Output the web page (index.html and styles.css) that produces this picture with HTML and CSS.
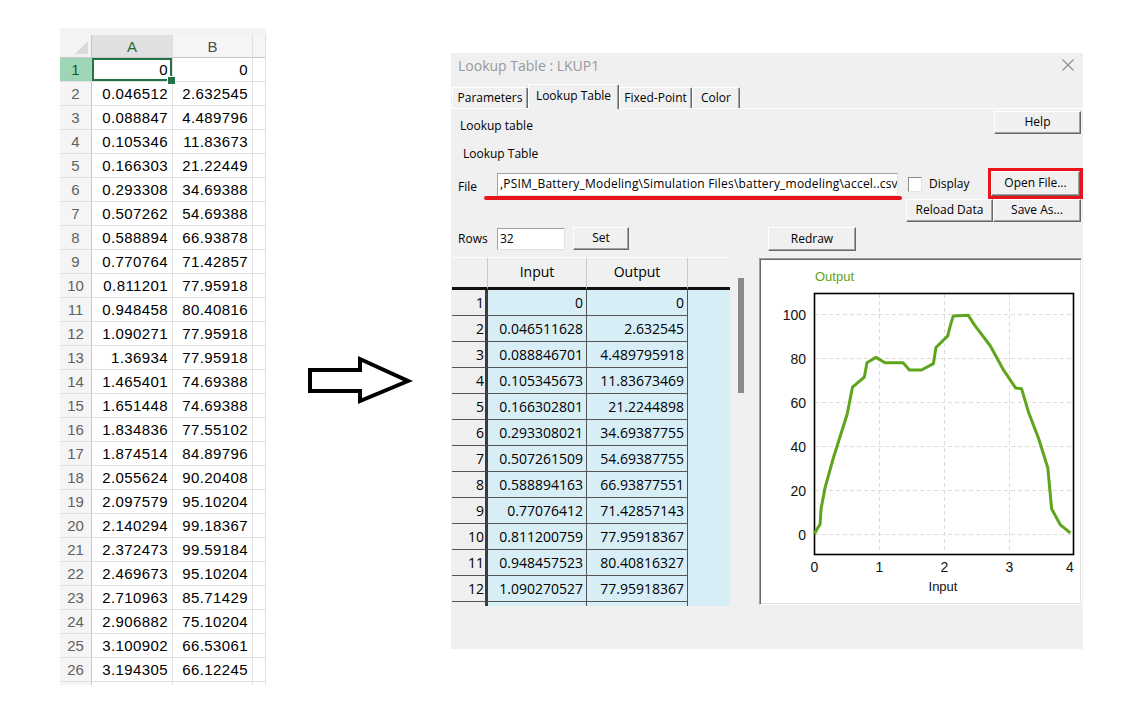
FILE: index.html
```html
<!DOCTYPE html>
<html lang="en">
<head>
  <meta charset="UTF-8" />
  <meta name="viewport" content="width=device-width, initial-scale=1.0"/>
  <title>Lookup Table : LKUP1</title>
  <link rel="stylesheet" href="styles.css">
</head>
<body>
  <div class="page">

    <!-- spreadsheet with the source data -->
    <div class="sheet">
      <div class="sheet-grid">
        <div class="corner"></div><div class="col-head active">A</div><div class="col-head">B</div><div class="col-head"></div>
        <div class="row-head active">1</div><div class="cell current">0</div><div class="cell">0</div><div class="cell"></div>
        <div class="row-head">2</div><div class="cell">0.046512</div><div class="cell">2.632545</div><div class="cell"></div>
        <div class="row-head">3</div><div class="cell">0.088847</div><div class="cell">4.489796</div><div class="cell"></div>
        <div class="row-head">4</div><div class="cell">0.105346</div><div class="cell">11.83673</div><div class="cell"></div>
        <div class="row-head">5</div><div class="cell">0.166303</div><div class="cell">21.22449</div><div class="cell"></div>
        <div class="row-head">6</div><div class="cell">0.293308</div><div class="cell">34.69388</div><div class="cell"></div>
        <div class="row-head">7</div><div class="cell">0.507262</div><div class="cell">54.69388</div><div class="cell"></div>
        <div class="row-head">8</div><div class="cell">0.588894</div><div class="cell">66.93878</div><div class="cell"></div>
        <div class="row-head">9</div><div class="cell">0.770764</div><div class="cell">71.42857</div><div class="cell"></div>
        <div class="row-head">10</div><div class="cell">0.811201</div><div class="cell">77.95918</div><div class="cell"></div>
        <div class="row-head">11</div><div class="cell">0.948458</div><div class="cell">80.40816</div><div class="cell"></div>
        <div class="row-head">12</div><div class="cell">1.090271</div><div class="cell">77.95918</div><div class="cell"></div>
        <div class="row-head">13</div><div class="cell">1.36934</div><div class="cell">77.95918</div><div class="cell"></div>
        <div class="row-head">14</div><div class="cell">1.465401</div><div class="cell">74.69388</div><div class="cell"></div>
        <div class="row-head">15</div><div class="cell">1.651448</div><div class="cell">74.69388</div><div class="cell"></div>
        <div class="row-head">16</div><div class="cell">1.834836</div><div class="cell">77.55102</div><div class="cell"></div>
        <div class="row-head">17</div><div class="cell">1.874514</div><div class="cell">84.89796</div><div class="cell"></div>
        <div class="row-head">18</div><div class="cell">2.055624</div><div class="cell">90.20408</div><div class="cell"></div>
        <div class="row-head">19</div><div class="cell">2.097579</div><div class="cell">95.10204</div><div class="cell"></div>
        <div class="row-head">20</div><div class="cell">2.140294</div><div class="cell">99.18367</div><div class="cell"></div>
        <div class="row-head">21</div><div class="cell">2.372473</div><div class="cell">99.59184</div><div class="cell"></div>
        <div class="row-head">22</div><div class="cell">2.469673</div><div class="cell">95.10204</div><div class="cell"></div>
        <div class="row-head">23</div><div class="cell">2.710963</div><div class="cell">85.71429</div><div class="cell"></div>
        <div class="row-head">24</div><div class="cell">2.906882</div><div class="cell">75.10204</div><div class="cell"></div>
        <div class="row-head">25</div><div class="cell">3.100902</div><div class="cell">66.53061</div><div class="cell"></div>
        <div class="row-head">26</div><div class="cell">3.194305</div><div class="cell">66.12245</div><div class="cell"></div>
        <div class="row-head"></div><div class="cell"></div><div class="cell"></div><div class="cell"></div>
      </div>
    </div>

    <svg class="arrow" width="110" height="52" viewBox="0 0 110 52">
      <polygon points="4,15 54,15 54,4 102,26 54,46 54,36 4,36" fill="none" stroke="#000" stroke-width="4" stroke-linejoin="miter"/>
    </svg>

    <!-- PSIM lookup table dialog -->
    <div class="dialog">
      <div class="titlebar">
        <span class="title">Lookup Table : LKUP1</span>
        <svg class="close" width="12" height="12" viewBox="0 0 12 12">
          <path d="M0.5 0.5 L11.5 11.5 M11.5 0.5 L0.5 11.5" stroke="#8c8c8c" stroke-width="1.1" fill="none"/>
        </svg>
      </div>

      <div class="tabs">
        <div class="tab tab-params">Parameters</div>
        <div class="tab tab-lookup active">Lookup Table</div>
        <div class="tab tab-fixed">Fixed-Point</div>
        <div class="tab tab-color">Color</div>
      </div>

      <div class="panel">
        <div class="row row-help">
          <span class="label">Lookup table</span>
          <div class="btn btn-help">Help</div>
        </div>

        <div class="row row-sub">
          <span class="label">Lookup Table</span>
        </div>

        <div class="row row-file">
          <span class="label file-label">File</span>
          <div class="field file-field">,PSIM_Battery_Modeling\Simulation Files\battery_modeling\accel..csv</div>
          <span class="check"></span>
          <span class="label check-label">Display</span>
          <div class="btn btn-open">Open File...</div>
          <div class="mark-line"></div>
        </div>

        <div class="row row-reload">
          <div class="btn btn-reload">Reload Data</div>
          <div class="btn btn-save">Save As...</div>
        </div>

        <div class="row row-rows">
          <span class="label rows-label">Rows</span>
          <div class="field rows-field">32</div>
          <div class="btn btn-set">Set</div>
          <div class="btn btn-redraw">Redraw</div>
        </div>

        <div class="main">
          <div class="grid">
            <div class="gh"></div><div class="gh">Input</div><div class="gh">Output</div><div class="gh last"></div>
            <div class="rh">1</div><div class="gc">0</div><div class="gc">0</div><div class="gx"></div>
            <div class="rh">2</div><div class="gc">0.046511628</div><div class="gc">2.632545</div><div class="gx"></div>
            <div class="rh">3</div><div class="gc">0.088846701</div><div class="gc">4.489795918</div><div class="gx"></div>
            <div class="rh">4</div><div class="gc">0.105345673</div><div class="gc">11.83673469</div><div class="gx"></div>
            <div class="rh">5</div><div class="gc">0.166302801</div><div class="gc">21.2244898</div><div class="gx"></div>
            <div class="rh">6</div><div class="gc">0.293308021</div><div class="gc">34.69387755</div><div class="gx"></div>
            <div class="rh">7</div><div class="gc">0.507261509</div><div class="gc">54.69387755</div><div class="gx"></div>
            <div class="rh">8</div><div class="gc">0.588894163</div><div class="gc">66.93877551</div><div class="gx"></div>
            <div class="rh">9</div><div class="gc">0.77076412</div><div class="gc">71.42857143</div><div class="gx"></div>
            <div class="rh">10</div><div class="gc">0.811200759</div><div class="gc">77.95918367</div><div class="gx"></div>
            <div class="rh">11</div><div class="gc">0.948457523</div><div class="gc">80.40816327</div><div class="gx"></div>
            <div class="rh">12</div><div class="gc">1.090270527</div><div class="gc">77.95918367</div><div class="gx"></div>
            <div class="rh"></div><div class="gc"></div><div class="gc"></div><div class="gx"></div>
          </div>

          <div class="scroll"></div>

          <div class="chart">
            <svg class="plot" width="321" height="345" viewBox="0 0 321 345">
              <text class="legend" x="55" y="22">Output</text>
              <g class="gridlines">
                <line x1="55" y1="55.5" x2="314" y2="55.5"/>
                <line x1="55" y1="99.5" x2="314" y2="99.5"/>
                <line x1="55" y1="143.5" x2="314" y2="143.5"/>
                <line x1="55" y1="187.5" x2="314" y2="187.5"/>
                <line x1="55" y1="231.5" x2="314" y2="231.5"/>
                <line x1="55" y1="275.5" x2="314" y2="275.5"/>
                <line x1="119.5" y1="35" x2="119.5" y2="296"/>
                <line x1="184.5" y1="35" x2="184.5" y2="296"/>
                <line x1="249.5" y1="35" x2="249.5" y2="296"/>
              </g>
              <rect class="frame" x="54.5" y="34.5" width="259" height="261"/>
              <!-- points in data units: x = Input, y = Output -->
              <polyline class="curve" transform="translate(54.3 275.3) scale(64.9 -2.2)"
                points="0,0 0.046512,2.632545 0.088847,4.489796 0.105346,11.83673 0.166303,21.22449 0.293308,34.69388 0.507262,54.69388 0.588894,66.93878 0.770764,71.42857 0.811201,77.95918 0.948458,80.40816 1.090271,77.95918 1.36934,77.95918 1.465401,74.69388 1.651448,74.69388 1.834836,77.55102 1.874514,84.89796 2.055624,90.20408 2.097579,95.10204 2.140294,99.18367 2.372473,99.59184 2.469673,95.10204 2.710963,85.71429 2.906882,75.10204 3.100902,66.53061 3.194305,66.12245 3.30495,55.10204 3.45466,43.67347 3.59834,30.20408 3.65612,11.63265 3.79121,4.28571 3.94512,0.61224"/>
              <g class="ticks ticks-y">
                <text x="46" y="60.5">100</text>
                <text x="46" y="104.5">80</text>
                <text x="46" y="148.5">60</text>
                <text x="46" y="192.5">40</text>
                <text x="46" y="236.5">20</text>
                <text x="46" y="280.5">0</text>
              </g>
              <g class="ticks ticks-x">
                <text x="54.5" y="313">0</text>
                <text x="119.5" y="313">1</text>
                <text x="184.5" y="313">2</text>
                <text x="249.5" y="313">3</text>
                <text x="310" y="313">4</text>
              </g>
              <text class="axis-title" x="183" y="332">Input</text>
            </svg>
          </div>
        </div>
      </div>
    </div>

  </div>
</body>
</html>
```

FILE: styles.css
```css
* {
  box-sizing: border-box;
}

body {
  margin: 0;
  background: #fff;
  color: #000;
  font-family: "Open Sans", Arial, sans-serif;
}

.page {
  display: flex;
  align-items: flex-start;
}

/* ---------- spreadsheet ---------- */

.sheet {
  margin: 28px 0 0 60px;
  width: 206px;
  height: 657px;
  overflow: hidden;
  padding-top: 7px;
  background: #f3f3f3;
  font-family: "Liberation Sans", Arial, sans-serif;
  font-size: 15px;
}

.sheet-grid {
  display: grid;
  grid-template-columns: 32px 81px 80px 13px;
  grid-template-rows: 23px;
  grid-auto-rows: 24px;
}

.sheet-grid > div {
  display: flex;
  align-items: center;
  border-right: 1px solid #e1e1e1;
  border-bottom: 1px solid #e1e1e1;
}

.corner {
  position: relative;
  background: #f3f3f3;
  border-right-color: #c8c8c8 !important;
  border-bottom-color: #c8c8c8 !important;
}

.corner::after {
  content: "";
  position: absolute;
  right: 3px;
  bottom: 3px;
  border-style: solid;
  border-width: 0 0 13px 13px;
  border-color: transparent transparent #dadada transparent;
}

.col-head {
  justify-content: center;
  background: #f5f5f5;
  color: #505050;
  border-bottom-color: #c8c8c8 !important;
}

.col-head.active {
  background: #e0e0e0;
  color: #1d6b3f;
}

.row-head {
  justify-content: center;
  background: #f5f5f5;
  color: #616161;
  border-right-color: #c8c8c8 !important;
}

.row-head.active {
  background: #9fd5b7;
  color: #0e5c2f;
}

.cell {
  justify-content: flex-end;
  padding-right: 4px;
  background: #fff;
  letter-spacing: 0.4px;
}

.cell.current {
  position: relative;
  box-shadow: inset 0 0 0 2px #217346;
}

.cell.current::after {
  content: "";
  position: absolute;
  right: -4px;
  bottom: -4px;
  width: 7px;
  height: 7px;
  background: #217346;
  border: 1px solid #fff;
  z-index: 1;
}

/* ---------- arrow ---------- */

.arrow {
  display: block;
  margin: 355px 0 0 40px;
}

/* ---------- dialog ---------- */

.dialog {
  margin: 53px 0 0 35px;
  width: 632px;
  height: 596px;
  background: #f0f0f0;
  display: flex;
  flex-direction: column;
  font-size: 12px;
}

.titlebar {
  height: 31px;
  display: flex;
  align-items: flex-start;
  justify-content: space-between;
  padding: 3px 9px 0 7px;
}

.title {
  font-size: 14px;
  line-height: 20px;
  color: #999;
}

.close {
  display: block;
  margin-top: 3px;
}

.tabs {
  height: 24px;
  display: flex;
  align-items: flex-end;
  padding-left: 1px;
}

.tab {
  height: 21px;
  line-height: 19px;
  text-align: center;
  background: #f0f0f0;
  border-top: 1px solid #fff;
  border-left: 1px solid #fff;
  border-right: 1px solid #696969;
  box-shadow: inset -1px 0 #a0a0a0;
  border-radius: 2px 2px 0 0;
}

.tab.active {
  height: 25px;
  line-height: 21px;
  margin-bottom: -1px;
  position: relative;
  z-index: 1;
}

.tab-params { width: 76px; }
.tab-lookup { width: 91px; }
.tab-fixed { width: 73px; }
.tab-color { width: 48px; }

.panel {
  flex: 1;
  border-top: 1px solid #fff;
  padding-left: 7px;
  display: flex;
  flex-direction: column;
}

.row {
  display: flex;
  align-items: flex-start;
  position: relative;
}

.label {
  line-height: 16px;
  white-space: nowrap;
}

.btn {
  text-align: center;
  background: #f0f0f0;
  border: 1px solid;
  border-color: #fff #696969 #696969 #fff;
  box-shadow: inset -1px -1px #a0a0a0;
  white-space: nowrap;
}

.field {
  background: #fff;
  border: 1px solid;
  border-color: #a0a0a0 #e3e3e3 #e3e3e3 #a0a0a0;
  padding-left: 2px;
  white-space: nowrap;
  overflow: hidden;
}

.row-help {
  margin-top: 2px;
  height: 23px;
}

.row-help .label {
  margin: 7px 0 0 2px;
}

.btn-help {
  margin-left: auto;
  margin-right: 2px;
  width: 87px;
  height: 23px;
  line-height: 20px;
}

.row-sub {
  margin-top: 7px;
  height: 24px;
}

.row-sub .label {
  margin-left: 5px;
  line-height: 25px;
}

.row-file {
  margin-top: 6px;
  height: 26px;
}

.file-label {
  width: 39px;
  margin-top: 8px;
}

.file-field {
  width: 401px;
  height: 23px;
  margin-top: 2px;
  line-height: 20px;
  letter-spacing: 0.2px;
}

.check {
  width: 14px;
  height: 15px;
  margin: 6px 0 0 10px;
  background: #fff;
  border: 1px solid;
  border-color: #8a8a8a #e3e3e3 #e3e3e3 #8a8a8a;
}

.check-label {
  margin: 5px 0 0 7px;
}

.btn-open {
  margin-left: auto;
  margin-right: 3px;
  width: 89px;
  height: 25px;
  line-height: 22px;
  outline: 3px solid #e8141c;
}

.mark-line {
  position: absolute;
  left: 26px;
  top: 25px;
  width: 418px;
  height: 4px;
  background: #e8141c;
  border-radius: 2px;
}

.row-reload {
  margin-top: 2px;
  height: 23px;
  justify-content: flex-end;
  padding-right: 2px;
}

.btn-reload {
  width: 87px;
  height: 23px;
  line-height: 20px;
}

.btn-save {
  width: 88px;
  height: 23px;
  line-height: 20px;
}

.row-rows {
  margin-top: 5px;
  height: 24px;
}

.rows-label {
  width: 39px;
  margin-top: 4px;
}

.rows-field {
  width: 68px;
  height: 22px;
  margin-top: 1px;
  line-height: 19px;
}

.btn-set {
  width: 56px;
  height: 23px;
  line-height: 20px;
  margin-left: 8px;
}

.btn-redraw {
  width: 88px;
  height: 24px;
  line-height: 21px;
  margin-left: 139px;
}

.main {
  margin: 6px 0 0 -6px;
  height: 349px;
  display: flex;
  align-items: flex-start;
}

/* data grid */

.grid {
  width: 278px;
  height: 349px;
  overflow: hidden;
  display: grid;
  grid-template-columns: 36px 99px 101px 42px;
  grid-template-rows: 33px;
  grid-auto-rows: 26px;
  font-size: 14px;
}

.gh {
  background: #f0f0f0;
  border-top: 1px solid #fff;
  border-right: 1px solid #c8c8c8;
  border-bottom: 3px solid #111;
  text-align: center;
  line-height: 28px;
}

.gh.last {
  border-right: none;
}

.rh {
  background: #f0f0f0;
  border-right: 3px solid #3c3c3c;
  border-bottom: 1px solid #555;
  text-align: right;
  padding-right: 1px;
  line-height: 25px;
}

.gc {
  background: #d7eef6;
  border-right: 1px solid #555;
  border-bottom: 1px solid #555;
  text-align: right;
  padding-right: 3px;
  line-height: 25px;
  white-space: nowrap;
}

.gx {
  background: #d7eef6;
}

.scroll {
  width: 6px;
  height: 115px;
  margin: 21px 0 0 8px;
  background: #8a8a8a;
}

/* chart */

.chart {
  width: 323px;
  height: 347px;
  margin: 1px 0 0 15px;
  background: #fff;
  border: 1px solid;
  border-color: #a0a0a0 #fff #fff #a0a0a0;
  box-shadow: inset 1px 1px #696969, inset -1px -1px #e3e3e3;
}

.plot {
  display: block;
  font-family: "Liberation Sans", Arial, sans-serif;
}

.gridlines line {
  stroke: #dcdcd2;
  stroke-width: 1;
  stroke-dasharray: 4 3;
}

.frame {
  fill: none;
  stroke: #000;
  stroke-width: 1.6;
}

.curve {
  fill: none;
  stroke: #5ea41c;
  stroke-width: 3;
  stroke-linejoin: round;
  vector-effect: non-scaling-stroke;
}

.legend {
  font-size: 13px;
  fill: #5ea41c;
}

.ticks text {
  font-size: 14px;
  fill: #111;
}

.ticks-y text {
  text-anchor: end;
}

.ticks-x text {
  text-anchor: middle;
}

.axis-title {
  font-size: 13px;
  text-anchor: middle;
  fill: #111;
}
```
